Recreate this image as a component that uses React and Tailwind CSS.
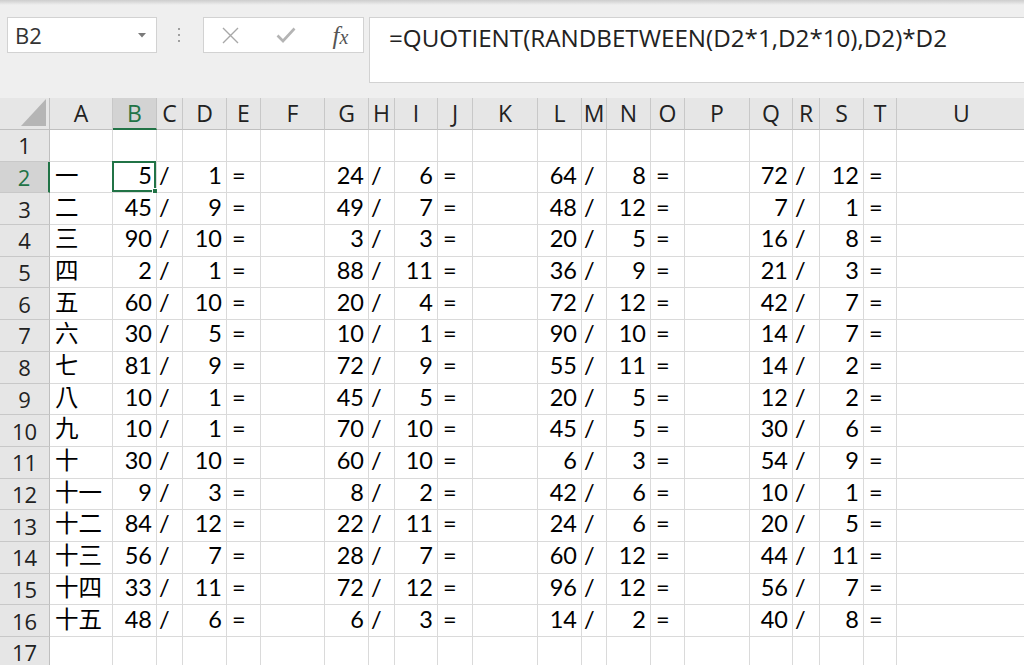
const COLS = ['A', 'B', 'C', 'D', 'E', 'F', 'G', 'H', 'I', 'J', 'K', 'L', 'M', 'N', 'O', 'P', 'Q', 'R', 'S', 'T', 'U'];

const GRID =
  'grid grid-cols-[50px_63px_44px_26px_44px_34px_64px_44px_26px_43px_35px_65px_44px_25px_44px_34px_65px_43px_27px_44px_33px_130px]';

const LABELS = ['一', '二', '三', '四', '五', '六', '七', '八', '九', '十', '十一', '十二', '十三', '十四', '十五'];

// [B, D], [G, I], [L, N], [Q, S]
const DATA = [
  [[5, 1], [24, 6], [64, 8], [72, 12]],
  [[45, 9], [49, 7], [48, 12], [7, 1]],
  [[90, 10], [3, 3], [20, 5], [16, 8]],
  [[2, 1], [88, 11], [36, 9], [21, 3]],
  [[60, 10], [20, 4], [72, 12], [42, 7]],
  [[30, 5], [10, 1], [90, 10], [14, 7]],
  [[81, 9], [72, 9], [55, 11], [14, 2]],
  [[10, 1], [45, 5], [20, 5], [12, 2]],
  [[10, 1], [70, 10], [45, 5], [30, 6]],
  [[30, 10], [60, 10], [6, 3], [54, 9]],
  [[9, 3], [8, 2], [42, 6], [10, 1]],
  [[84, 12], [22, 11], [24, 6], [20, 5]],
  [[56, 7], [28, 7], [60, 12], [44, 11]],
  [[33, 11], [72, 12], [96, 12], [56, 7]],
  [[48, 6], [6, 3], [14, 2], [40, 8]],
];

function rowCells(i) {
  if (i < 0 || i >= DATA.length) return {};
  const d = DATA[i];
  return {
    A: LABELS[i],
    B: d[0][0], C: '/', D: d[0][1], E: '=',
    G: d[1][0], H: '/', I: d[1][1], J: '=',
    L: d[2][0], M: '/', N: d[2][1], O: '=',
    Q: d[3][0], R: '/', S: d[3][1], T: '=',
  };
}

function Toolbar() {
  return (
    <div className="h-[98px] bg-[#efefef] flex flex-col">
      <div className="h-[5px] bg-gradient-to-b from-[#cdcdcd] to-[#efefef]" />
      <div className="flex items-start pt-[12px] pl-[7px]">
        <div className="w-[150px] h-[36px] bg-white border border-[#d2d2d2] flex items-center justify-between pl-[7px] pr-[10px]">
          <span className="font-['Open_Sans',sans-serif] text-[22px] leading-none text-[#333]">B2</span>
          <svg width="8" height="5" viewBox="0 0 8 5">
            <polygon points="0,0 8,0 4,4.5" fill="#7a7a7a" />
          </svg>
        </div>
        <div className="w-[44px] h-[36px] flex flex-col items-center justify-center gap-[4px]">
          <span className="w-[2px] h-[2px] bg-[#a0a0a0]" />
          <span className="w-[2px] h-[2px] bg-[#a0a0a0]" />
          <span className="w-[2px] h-[2px] bg-[#a0a0a0]" />
        </div>
        <div className="ml-[2px] w-[161px] h-[36px] bg-white border border-[#d2d2d2] flex items-center">
          <div className="w-[52px] flex justify-center">
            <svg width="17" height="17" viewBox="0 0 17 17">
              <path d="M1 1 L16 16 M16 1 L1 16" stroke="#a8a8a8" strokeWidth="1.4" fill="none" />
            </svg>
          </div>
          <div className="w-[60px] flex justify-center">
            <svg width="20" height="16" viewBox="0 0 20 16">
              <path d="M1.5 8.5 L7 14 L18.5 1.5" stroke="#b4b4b4" strokeWidth="2.6" fill="none" />
            </svg>
          </div>
          <div className="flex-1 flex justify-center pl-[2px]">
            <span className="font-['Liberation_Serif',serif] italic text-[25px] leading-none text-[#555]">
              f<span className="text-[20px]">x</span>
            </span>
          </div>
        </div>
        <div className="ml-[5px] flex-1 h-[66px] bg-white border border-r-0 border-[#d2d2d2] pl-[19px] pt-[5px]">
          <span className="font-['Open_Sans',sans-serif] text-[24.2px] leading-[30px] text-[#222]">
            =QUOTIENT(RANDBETWEEN(D2*1,D2*10),D2)*D2
          </span>
        </div>
      </div>
    </div>
  );
}

function HeaderRow() {
  return (
    <div className={`${GRID} h-[32px]`}>
      <div className="bg-[#e6e6e6] border-r border-b border-[#bfbfbf] flex items-end justify-end pr-[3px] pb-[3px]">
        <svg width="25" height="27" viewBox="0 0 25 27">
          <polygon points="25,0 25,27 0,27" fill="#b5b5b5" />
        </svg>
      </div>
      {COLS.map((c) =>
        c === 'B' ? (
          <div
            key={c}
            className="bg-[#d3d3d3] border-r border-[#c4c4c4] border-b-2 border-b-[#217346] flex items-center justify-center font-['Open_Sans',sans-serif] text-[23px] leading-none text-[#217346]"
          >
            {c}
          </div>
        ) : (
          <div
            key={c}
            className="bg-[#e6e6e6] border-r border-b border-[#c8c8c8] border-b-[#bfbfbf] flex items-center justify-center font-['Open_Sans',sans-serif] text-[23px] leading-none text-[#222]"
          >
            {c}
          </div>
        )
      )}
    </div>
  );
}

function Row({ n }) {
  const cells = rowCells(n - 2);
  const sel = n === 2;
  return (
    <div className={`${GRID} h-[31.7px]`}>
      <div
        className={
          sel
            ? "bg-[#d3d3d3] border-r-2 border-r-[#217346] border-b border-b-[#c8c8c8] flex items-center justify-center font-['Open_Sans',sans-serif] text-[22px] leading-none text-[#217346]"
            : "bg-[#e6e6e6] border-r border-b border-[#c8c8c8] border-r-[#bfbfbf] flex items-center justify-center font-['Open_Sans',sans-serif] text-[22px] leading-none text-[#222]"
        }
      >
        {n}
      </div>
      {COLS.map((c) => {
        const v = cells[c];
        const num = typeof v === 'number';
        const pad = num ? 'justify-end pr-[4px]' : v === '/' ? 'justify-start pl-[2px]' : 'justify-start pl-[5px]';
        return (
          <div
            key={c}
            className={`relative bg-white border-r border-b border-[#dadada] flex items-end pb-[5px] font-['Lato','Noto_Sans_CJK_TC',sans-serif] text-[23.5px] leading-none text-black whitespace-nowrap ${pad}`}
          >
            {v}
            {sel && c === 'B' && (
              <div className="absolute -left-px -top-px right-0 bottom-0 border-2 border-[#217346]">
                <div className="absolute -right-[5px] -bottom-[5px] w-[7px] h-[7px] bg-[#217346] border border-white" />
              </div>
            )}
          </div>
        );
      })}
    </div>
  );
}

export default function App() {
  const rows = Array.from({ length: 17 }, (_, i) => i + 1);
  return (
    <div className="w-[1024px] h-[665px] overflow-hidden bg-white">
      <Toolbar />
      <HeaderRow />
      {rows.map((n) => (
        <Row key={n} n={n} />
      ))}
    </div>
  );
}
